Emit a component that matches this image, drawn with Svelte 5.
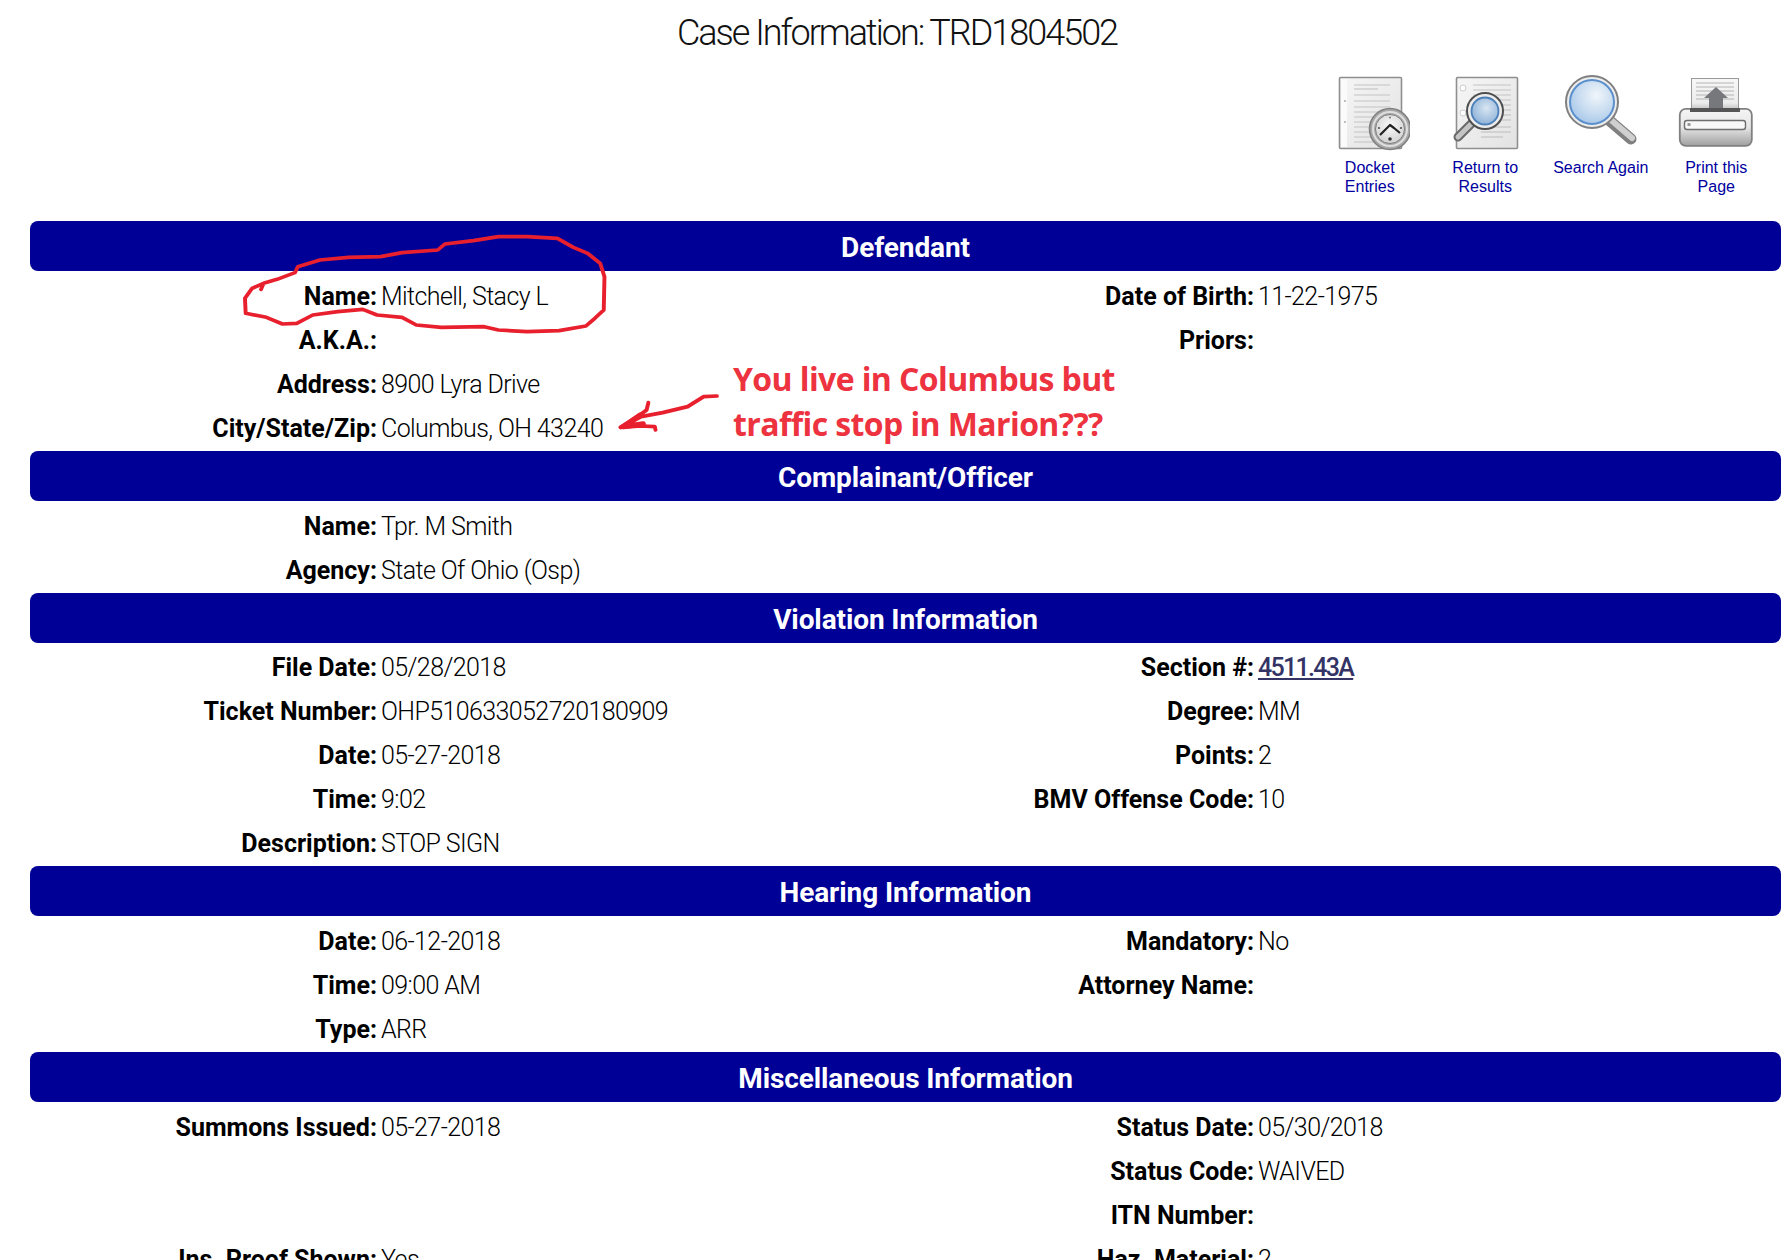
<script>
  const sections = [
    {
      title: 'Defendant',
      rows: [
        ['Name', 'Mitchell, Stacy L', 'Date of Birth', '11-22-1975'],
        ['A.K.A.', '', 'Priors', ''],
        ['Address', '8900 Lyra Drive'],
        ['City/State/Zip', 'Columbus, OH 43240']
      ]
    },
    {
      title: 'Complainant/Officer',
      rows: [
        ['Name', 'Tpr. M Smith'],
        ['Agency', 'State Of Ohio (Osp)']
      ]
    },
    {
      title: 'Violation Information',
      rows: [
        ['File Date', '05/28/2018', 'Section #', '4511.43A', true],
        ['Ticket Number', 'OHP510633052720180909', 'Degree', 'MM'],
        ['Date', '05-27-2018', 'Points', '2'],
        ['Time', '9:02', 'BMV Offense Code', '10'],
        ['Description', 'STOP SIGN']
      ]
    },
    {
      title: 'Hearing Information',
      rows: [
        ['Date', '06-12-2018', 'Mandatory', 'No'],
        ['Time', '09:00 AM', 'Attorney Name', ''],
        ['Type', 'ARR']
      ]
    },
    {
      title: 'Miscellaneous Information',
      rows: [
        ['Summons Issued', '05-27-2018', 'Status Date', '05/30/2018'],
        ['', '', 'Status Code', 'WAIVED'],
        ['', '', 'ITN Number', ''],
        ['Ins. Proof Shown', 'Yes', 'Haz. Material', '2']
      ]
    }
  ];

  const docLines = [18, 24, 30, 35, 40, 45, 50, 55, 60, 65];
</script>

<div class="page">
  <h1>Case Information: TRD1804502</h1>

  <nav class="toolbar">
    <a href="#docket" class="tool">
      <svg viewBox="0 0 80 80" width="80" height="80">
        <defs>
          <linearGradient id="paperA" x1="0" y1="0" x2="1" y2="1">
            <stop offset="0" stop-color="#f6f6f6" /><stop offset="1" stop-color="#e2e2e2" />
          </linearGradient>
          <radialGradient id="clockFace" cx="0.5" cy="0.4" r="0.6">
            <stop offset="0" stop-color="#fafafa" /><stop offset="1" stop-color="#d2d2d2" />
          </radialGradient>
        </defs>
        <rect x="9.5" y="4.5" width="62" height="71" fill="url(#paperA)" stroke="#8f8f8f" stroke-width="1.6" rx="1" />
        <rect x="11" y="6" width="6" height="68" fill="#fbfbfb" />
        <g stroke="#c4c4c4" stroke-width="1.2">
          <line x1="24" y1="12" x2="60" y2="12" />
          <line x1="24" y1="16" x2="48" y2="16" />
          {#each docLines as y}
            <line x1="24" y1={y + 4} x2="60" y2={y + 4} />
          {/each}
        </g>
        <circle cx="15" cy="28" r="1" fill="#aaa" />
        <circle cx="15" cy="49" r="1" fill="#aaa" />
        <circle cx="60" cy="56" r="20.5" fill="#a8a8a8" stroke="#808080" stroke-width="1.6" />
        <circle cx="60" cy="56" r="17" fill="none" stroke="#dedede" stroke-width="2" />
        <circle cx="60" cy="56" r="14.5" fill="url(#clockFace)" stroke="#7e7e7e" />
        <path d="M50 62 L56 56 L60 52 L64 55 L70 60" fill="none" stroke="#222" stroke-width="2.2" stroke-linejoin="round" />
        <circle cx="60" cy="44.5" r="1" fill="#777" />
        <circle cx="60" cy="66" r="1.8" fill="#333" />
        <circle cx="49" cy="55" r="1.1" fill="#555" />
        <circle cx="71" cy="55" r="1.1" fill="#555" />
      </svg>
      <span>Docket<br />Entries</span>
    </a>

    <a href="#results" class="tool">
      <svg viewBox="0 0 80 80" width="80" height="80">
        <defs>
          <linearGradient id="paperB" x1="0" y1="0" x2="1" y2="1">
            <stop offset="0" stop-color="#f6f6f6" /><stop offset="1" stop-color="#e2e2e2" />
          </linearGradient>
          <radialGradient id="lensB" cx="0.55" cy="0.4" r="0.6">
            <stop offset="0" stop-color="#d9e6f2" /><stop offset="1" stop-color="#8fb3d9" />
          </radialGradient>
        </defs>
        <rect x="11.5" y="4.5" width="61" height="71" fill="url(#paperB)" stroke="#8f8f8f" stroke-width="1.6" rx="1" />
        <circle cx="18" cy="15" r="3" fill="#fff" stroke="#ccc" />
        <circle cx="18" cy="40" r="3" fill="#fff" stroke="#ccc" />
        <g stroke="#c4c4c4" stroke-width="1.2">
          <line x1="28" y1="12" x2="66" y2="12" />
          <line x1="28" y1="17" x2="66" y2="17" />
          <line x1="28" y1="22" x2="66" y2="22" />
          <line x1="28" y1="27" x2="66" y2="27" />
          <line x1="50" y1="32" x2="66" y2="32" />
          <line x1="55" y1="37" x2="66" y2="37" />
          <line x1="55" y1="42" x2="66" y2="42" />
          <line x1="50" y1="47" x2="66" y2="47" />
          <line x1="42" y1="54" x2="66" y2="54" />
          <line x1="36" y1="59" x2="66" y2="59" />
          <line x1="36" y1="64" x2="58" y2="64" />
        </g>
        <line x1="28" y1="49" x2="13" y2="64" stroke="#6a6a6a" stroke-width="9" stroke-linecap="round" />
        <line x1="28" y1="49" x2="13" y2="64" stroke="#c4c4c4" stroke-width="5" stroke-linecap="round" />
        <circle cx="40" cy="38" r="18" fill="#ececec" stroke="#4f4f4f" stroke-width="2" />
        <circle cx="40" cy="38" r="13.5" fill="url(#lensB)" stroke="#4a7fb8" stroke-width="1.8" />
      </svg>
      <span>Return to<br />Results</span>
    </a>

    <a href="#search" class="tool">
      <svg viewBox="0 0 80 80" width="80" height="80">
        <defs>
          <radialGradient id="lensC" cx="0.6" cy="0.35" r="0.7">
            <stop offset="0" stop-color="#f0f5fa" /><stop offset="0.6" stop-color="#c6dbf0" /><stop offset="1" stop-color="#a5c6e8" />
          </radialGradient>
        </defs>
        <line x1="49" y1="48" x2="70" y2="66" stroke="#808080" stroke-width="11" stroke-linecap="round" />
        <line x1="50" y1="47" x2="71" y2="65" stroke="#cfcfcf" stroke-width="6" stroke-linecap="round" />
        <circle cx="31" cy="29" r="26" fill="#ededed" stroke="#808080" stroke-width="2" />
        <circle cx="31" cy="29" r="22" fill="url(#lensC)" stroke="#5b90cc" stroke-width="2" />
      </svg>
      <span>Search Again</span>
    </a>

    <a href="#print" class="tool">
      <svg viewBox="0 0 80 80" width="80" height="80">
        <defs>
          <linearGradient id="printBody" x1="0" y1="0" x2="0" y2="1">
            <stop offset="0" stop-color="#f5f5f5" /><stop offset="0.5" stop-color="#e6e6e6" /><stop offset="1" stop-color="#a0a0a0" />
          </linearGradient>
          <linearGradient id="printPaper" x1="0" y1="0" x2="0" y2="1">
            <stop offset="0" stop-color="#f7f7f7" /><stop offset="0.7" stop-color="#ececec" /><stop offset="1" stop-color="#a5a5a5" />
          </linearGradient>
        </defs>
        <rect x="15.5" y="5.5" width="47" height="35" fill="url(#printPaper)" stroke="#9a9a9a" />
        <g stroke="#b4b4b4" stroke-width="1.2">
          <line x1="20" y1="10" x2="58" y2="10" />
          <line x1="20" y1="14" x2="58" y2="14" />
          <line x1="20" y1="18" x2="58" y2="18" />
          <line x1="20" y1="22" x2="58" y2="22" />
          <line x1="20" y1="26" x2="58" y2="26" />
        </g>
        <path d="M40 14 L52 25 L47 25 L47 35 L33 35 L33 25 L28 25 Z" fill="#76787c" />
        <rect x="3.8" y="35.8" width="72" height="37" rx="6" fill="url(#printBody)" stroke="#808080" stroke-width="1.8" />
        <rect x="14" y="35" width="50" height="4" fill="#555" />
        <rect x="8.5" y="47.5" width="61" height="9" rx="2.5" fill="#f8f8f8" stroke="#6e6e6e" stroke-width="1.4" />
        <rect x="11.5" y="50" width="3" height="3" fill="#999" />
      </svg>
      <span>Print this<br />Page</span>
    </a>
  </nav>

  {#each sections as section}
    <section>
      <h2>{section.title}</h2>
      <div class="rows">
        {#each section.rows as [label, value, label2, value2, isLink]}
          <div class="row">
            <b>{label ? label + ':' : ''}</b>
            <span>{value}</span>
            <b>{label2 ? label2 + ':' : ''}</b>
            {#if isLink}
              <a href="#section" class="code">{value2}</a>
            {:else}
              <span>{value2 ?? ''}</span>
            {/if}
          </div>
        {/each}
      </div>
    </section>
  {/each}

  <!-- red pen marks somebody drew on top of the page -->
  <svg class="scribble" viewBox="0 0 1789 1260" width="1789" height="1260">
    <g transform="translate(170 220) scale(0.357 0.3333)" fill="none" stroke="#e8202e" stroke-width="11" stroke-linejoin="round" stroke-linecap="round">
      <path d="M255 208 L262 190 L300 178 L350 158 L358 140 L420 120 L500 112 L590 110 L650 98 L750 90 L770 72 L850 62 L920 50 L1000 50 L1085 55 L1130 82 L1170 100 L1205 130 L1217 170 L1215 270 L1190 295 L1165 318 L1090 332 L1000 335 L920 330 L880 320 L760 322 L690 315 L650 292 L580 285 L540 268 L470 275 L400 285 L355 310 L315 312 L270 292 L212 280 L210 235 L230 205 L262 190" />
      <path d="M1532 528 L1495 530 L1450 560 L1380 578 L1320 590 L1262 622" />
      <path d="M1340 548 L1335 570 L1310 590 L1262 622 L1320 618 L1358 620 L1360 630" />
      <path d="M1318 585 L1270 620 L1325 612" stroke-width="16" />
    </g>
  </svg>
  <p class="note">You live in Columbus but<br />traffic stop in Marion???</p>
</div>

<style>
  :global(body) {
    margin: 0;
    background: #fff;
    overflow: hidden;
  }

  .page {
    position: relative;
    height: 1260px;
    overflow: hidden;
    font-family: Roboto, "Liberation Sans", sans-serif;
    color: #000;
  }

  h1 {
    margin: 0;
    padding: 12px 0 0 5px;
    height: 48px;
    line-height: 42px;
    text-align: center;
    font-size: 36px;
    font-weight: 300;
    letter-spacing: -2px;
    color: #111;
  }

  .toolbar {
    display: flex;
    justify-content: flex-end;
    height: 161px;
    padding: 13px 15px 0 0;
    box-sizing: border-box;
  }

  .tool {
    display: flex;
    flex-direction: column;
    align-items: center;
    width: 115.5px;
    font-family: "Liberation Sans", Arial, sans-serif;
    font-size: 16px;
    line-height: 19px;
    text-align: center;
    color: #0000a0;
    text-decoration: none;
  }

  .tool svg {
    display: block;
    margin-bottom: 5px;
  }

  section {
    margin: 0 8px 0 30px;
  }

  h2 {
    margin: 0;
    height: 50px;
    line-height: 54px;
    border-radius: 8px;
    background: #000096;
    color: #fff;
    text-align: center;
    font-size: 28px;
    font-weight: 700;
    letter-spacing: -0.1px;
  }

  .rows {
    padding-top: 4px;
  }

  section:nth-of-type(3) .rows {
    padding-top: 3px;
  }

  .row {
    display: grid;
    grid-template-columns: 347px 526px 343px 1fr;
    column-gap: 4px;
    height: 44px;
    line-height: 44px;
    font-size: 25px;
    font-weight: 300;
    letter-spacing: -0.6px;
  }

  .row b {
    text-align: right;
    font-weight: 700;
    letter-spacing: 0;
    white-space: nowrap;
  }

  .code {
    color: #333366;
    font-weight: 500;
    letter-spacing: -1.7px;
    text-decoration: underline;
  }

  .scribble {
    position: absolute;
    left: 0;
    top: 0;
    pointer-events: none;
  }

  .note {
    position: absolute;
    left: 733px;
    top: 356px;
    margin: 0;
    font-family: "Open Sans", sans-serif;
    font-size: 32px;
    font-weight: 700;
    line-height: 45px;
    letter-spacing: -0.6px;
    color: #ee3340;
    white-space: nowrap;
  }
</style>
